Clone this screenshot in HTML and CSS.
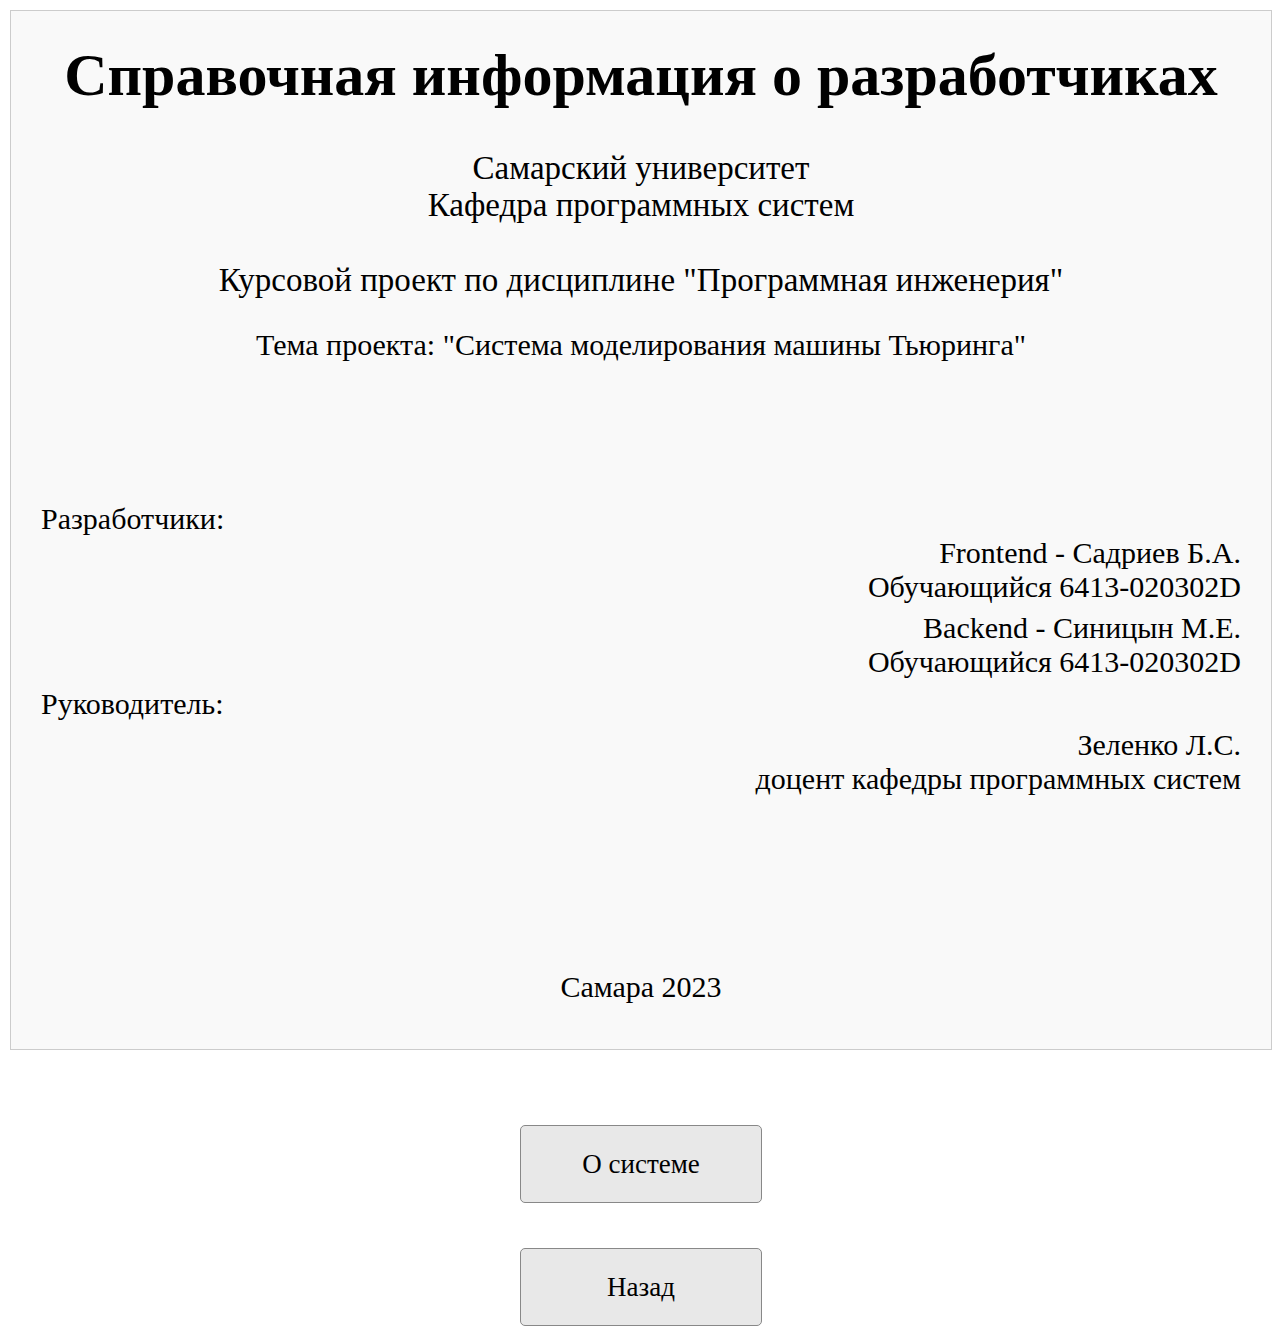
FILE: index.html
```html
<!DOCTYPE html>
<html lang="ru">
<head>
<meta charset="utf-8">
<title>Справочная информация о разработчиках</title>
<link rel="stylesheet" href="styles.css">
</head>
<body>
<div class="card">
  <h1 class="title">Справочная информация о разработчиках</h1>
  <div class="uni">
    <div>Самарский университет</div>
    <div>Кафедра программных систем</div>
  </div>
  <div class="course">Курсовой проект по дисциплине "Программная инженерия"</div>
  <div class="theme">Тема проекта: "Система моделирования машины Тьюринга"</div>
  <div class="people">
    <div class="label">Разработчики:</div>
    <div class="person">
      <div>Frontend - Садриев Б.А.</div>
      <div>Обучающийся 6413-020302D</div>
    </div>
    <div class="person">
      <div>Backend - Синицын М.Е.</div>
      <div>Обучающийся 6413-020302D</div>
    </div>
    <div class="label">Руководитель:</div>
    <div class="person lead">
      <div>Зеленко Л.С.</div>
      <div>доцент кафедры программных систем</div>
    </div>
  </div>
  <div class="city">Самара 2023</div>
</div>
<div class="actions">
  <button class="btn">О системе</button>
  <button class="btn">Назад</button>
</div>
</body>
</html>
```
FILE: styles.css
```css
html, body {
  margin: 0;
  padding: 0;
  background: #ffffff;
}
body {
  font-family: "Liberation Serif", "Times New Roman", serif;
  color: #000;
  padding: 10px 0 0 10px;
}
.card {
  box-sizing: border-box;
  width: 1262px;
  height: 1040px;
  background: #f9f9f9;
  border: 1px solid #cccccc;
  padding: 0 30px;
  text-align: center;
}
.title {
  font-size: 60px;
  font-weight: bold;
  margin: 0;
  padding-top: 30px;
  line-height: 69px;
}
.uni {
  font-size: 33px;
  line-height: 37px;
  margin-top: 40px;
}
.course {
  font-size: 33px;
  line-height: 37px;
  margin-top: 38px;
}
.theme {
  font-size: 30px;
  line-height: 34px;
  margin-top: 29px;
}
.people {
  margin-top: 140px;
  font-size: 30px;
  line-height: 34px;
  text-align: left;
  display: flex;
  flex-direction: column;
}
.person {
  text-align: right;
  margin-top: 0;
}
.person + .person {
  margin-top: 7px;
}
.person.lead {
  margin-top: 7px;
}
.person + .label {
  margin-top: 8px;
}
.city {
  font-size: 30px;
  line-height: 34px;
  margin-top: 174px;
}
.actions {
  display: flex;
  flex-direction: column;
  align-items: center;
  gap: 45px;
  padding-top: 75px;
  width: 1262px;
}
.btn {
  width: 242px;
  height: 78px;
  background: #e8e8e8;
  border: 1px solid #888888;
  border-radius: 5px;
  font-family: "Liberation Serif", "Times New Roman", serif;
  font-size: 27px;
  color: #000;
  padding: 0;
}
```
